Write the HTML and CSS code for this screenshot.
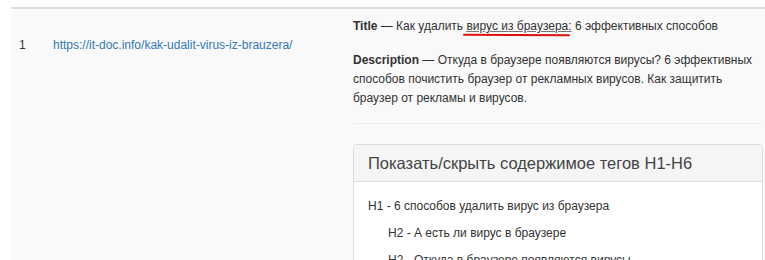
FILE: index.html
```html
<!DOCTYPE html>
<html lang="ru">
<head>
  <meta charset="UTF-8" />
  <title>Результаты</title>
  <link rel="stylesheet" href="styles.css">
</head>
<body>
  <div class="results">
    <div class="row">
      <div class="cell num">1</div>
      <div class="cell url"><a href="#">https://it-doc.info/kak-udalit-virus-iz-brauzera/</a></div>
      <div class="cell info">
        <p class="title"><b>Title</b> — Как удалить <span class="mark">вирус из браузера:</span> 6 эффективных способов</p>
        <p class="desc"><b>Description</b> — Откуда в браузере появляются вирусы? 6 эффективных способов почистить браузер от рекламных вирусов. Как защитить браузер от рекламы и вирусов.</p>
        <div class="sep"></div>

        <!-- Headings panel -->
        <div class="panel">
          <div class="panel-heading">Показать/скрыть содержимое тегов H1-H6</div>
          <div class="panel-body">
            <div class="h h1">H1 - 6 способов удалить вирус из браузера</div>
            <div class="h h2">H2 - А есть ли вирус в браузере</div>
            <div class="h h2">H2 - Откуда в браузере появляются вирусы</div>
          </div>
        </div>
      </div>
    </div>
  </div>
</body>
</html>
```

FILE: styles.css
```css
body {
  margin: 0;
  padding: 7px 0 0 11px;
  font-family: "Liberation Sans", Arial, sans-serif;
  font-size: 12px;
  line-height: 19px;
  color: #333;
  background-color: #fff;
  overflow: hidden;
}
.results {
  border-top: 2px solid #ddd;
  background-color: #f9f9f9;
  height: 400px;
}
.row {
  display: flex;
}
.cell {
  padding: 27px 8px 0;
}
.num {
  width: 18px;
}
.url {
  width: 284px;
}
.url a {
  color: #337ab7;
  text-decoration: none;
}
.info {
  flex: 1;
  padding: 8px 2px 0 8px;
}
.info p {
  margin: 0;
}
.title {
  margin-bottom: 15px !important;
}
.mark {
  position: relative;
  text-decoration: underline;
  text-decoration-color: #777;
}
.mark::after {
  content: "";
  position: absolute;
  left: -3px;
  right: 1px;
  bottom: -3px;
  height: 2px;
  border-radius: 2px;
  background-color: #e01010;
  transform: rotate(0.4deg);
}
.desc {
  width: 405px;
}
.sep {
  border-top: 1px solid #eee;
  margin-top: 15px;
}
.panel {
  margin-top: 20px;
  border: 1px solid #ddd;
  border-radius: 4px;
  background-color: #fff;
}
.panel-heading {
  background-color: #f5f5f5;
  border-bottom: 1px solid #ddd;
  border-radius: 3px 3px 0 0;
  padding: 8px 14px;
  font-size: 16.5px;
  line-height: 20px;
  color: #444;
}
.panel-body {
  padding: 15px 14px 0;
}
.h {
  margin-bottom: 8px;
}
.h2 {
  padding-left: 20px;
}
```
